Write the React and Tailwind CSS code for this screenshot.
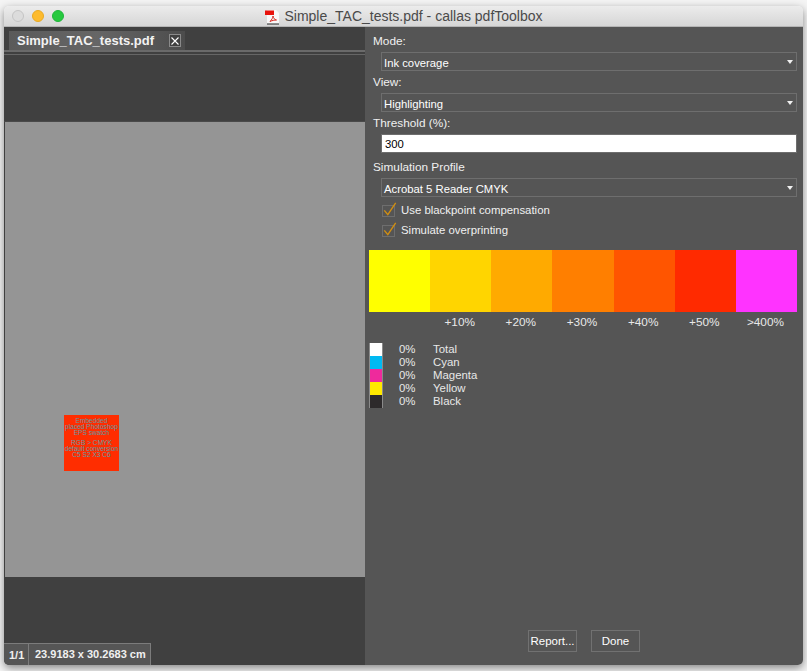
import React from "react";

const barColors = ["#ffff00", "#ffd500", "#ffaa00", "#ff7f00", "#ff5500", "#ff2a00", "#ff33ff"];
const barLabels = ["", "+10%", "+20%", "+30%", "+40%", "+50%", ">400%"];

const legend = [
  { name: "Total", color: "bg-[#ffffff]" },
  { name: "Cyan", color: "bg-[#00b9f2]" },
  { name: "Magenta", color: "bg-[#ee2a9c]" },
  { name: "Yellow", color: "bg-[#ffe900]" },
  { name: "Black", color: "bg-[#2d2a2b]" },
];

const PdfIcon = () => (
  <svg width="16" height="16" viewBox="0 0 16 16" className="mr-[4px]">
    <path d="M3 1H12L15 4V15H3Z" fill="#f8f8f8" />
    <path d="M1 1.5H10V6H1Z" fill="#e8120c" />
    <path d="M3 14.5H15V15.5H3Z" fill="#222222" />
    <path d="M6 12.5C8 10.5 9 8.5 9 7C9.5 9.5 10.5 10.5 12.5 11C10.5 11 8 11.5 6 12.5Z" fill="none" stroke="#d8261c" strokeWidth="1" />
  </svg>
);

const Select = ({ value }) => (
  <div className="ml-[8px] flex h-[19px] items-center justify-between border border-[#6e6e6e] pl-[2px] pr-[3px] pt-[3px] text-[11.3px] text-white">
    <span>{value}</span>
    <svg width="6" height="4" viewBox="0 0 6 4" className="mb-[3px]">
      <path d="M0 0H6L3 4Z" fill="#f0f0f0" />
    </svg>
  </div>
);

const Check = ({ label }) => (
  <div className="ml-[9px] mt-[8px] flex h-[12px] items-center">
    <div className="relative h-[12px] w-[13px] border border-[#6e6e6e]">
      <svg width="14" height="14" viewBox="0 0 16 16" className="absolute left-[0px] top-[-4px]">
        <path d="M1.5 9.5L5.5 14.5L14.5 1" fill="none" stroke="#d08e12" strokeWidth="1.6" />
      </svg>
    </div>
    <span className="ml-[6px] text-[11.4px] text-[#f0f0f0]">{label}</span>
  </div>
);

export default function App() {
  return (
    <div className="h-[671px] w-[807px] overflow-hidden bg-[#f4f4f4] px-[4px] pb-[6px] pt-[6px] font-['Liberation_Sans',Arial,sans-serif] text-[11.8px]">
      <div className="flex h-[659px] w-[799px] flex-col overflow-hidden rounded-[5px] shadow-[0_3px_8px_rgba(0,0,0,0.45)]">
        {/* title bar */}
        <div className="relative flex h-[21px] items-center justify-center border-b border-[#b5b5b5] bg-gradient-to-b from-[#ececec] to-[#d6d6d6]">
          <div className="absolute left-[8px] top-[4px] flex gap-[8px]">
            <div className="h-[12px] w-[12px] rounded-full border border-[#c4c4c4] bg-[#dcdcdc]" />
            <div className="h-[12px] w-[12px] rounded-full border border-[#e8a923] bg-[#fdbb2e]" />
            <div className="h-[12px] w-[12px] rounded-full border border-[#1fb53a] bg-[#27c93f]" />
          </div>
          <div className="flex items-center pt-[1px] text-[14px] text-[#4a4a4a]">
            <PdfIcon />
            <span>Simple_TAC_tests.pdf - callas pdfToolbox</span>
          </div>
        </div>

        <div className="flex min-h-0 flex-1">
          {/* left: document view */}
          <div className="flex w-[361px] flex-col bg-[#404040]">
            <div className="h-[25px] pl-[5px] pt-[4px]">
              <div className="flex h-[21px] w-[176px] items-center justify-between border-b-2 border-[#dc9400] bg-gradient-to-r from-[#5a5a5a] via-[#666666] to-[#4c4c4c] pl-[8px] pr-[4px] text-[13px] font-bold text-[#f2f2f2]">
                <span>Simple_TAC_tests.pdf</span>
                <div className="flex h-[13px] w-[12px] items-center justify-center border border-[#8a8a8a] bg-[#404040]">
                  <svg width="8" height="8" viewBox="0 0 8 8">
                    <path d="M0.5 0.5L7.5 7.5M7.5 0.5L0.5 7.5" stroke="#ffffff" strokeWidth="1.1" />
                  </svg>
                </div>
              </div>
            </div>
            <div className="mt-[-2px] h-[2px] bg-[#6a6a6a]" />
            <div className="mt-[2px] h-[1px] bg-[#666666]" />
            <div className="h-[67px] border-b border-[#4a4a4a]" />
            <div className="ml-[1px] flex h-[455px] flex-col bg-[#959595] pl-[59px] pt-[293px]">
              <div className="flex h-[56px] w-[55px] flex-col items-center bg-[#ff2d00] pt-[3px] text-center text-[6.6px] leading-[6px] text-[#5f9aa0]">
                <span>Embedded</span>
                <span className="whitespace-nowrap">placed Photoshop</span>
                <span>EPS swatch</span>
                <span className="mt-[4px]">RGB &gt; CMYK</span>
                <span className="whitespace-nowrap">default conversion</span>
                <span>C5 S2 X3 C6</span>
              </div>
            </div>
            <div className="flex flex-1 flex-col justify-end">
              <div className="flex h-[22px] w-[147px] items-center border-r border-t border-[#7c7c7c] bg-[#565656] font-bold text-[#f0f0f0]">
                <span className="w-[25px] border-r border-[#7c7c7c] pl-[5px] text-[11px] leading-[22px]">1/1</span>
                <span className="pl-[6px] text-[11px]">23.9183 x 30.2683 cm</span>
              </div>
            </div>
          </div>

          {/* right: settings */}
          <div className="flex flex-1 flex-col bg-[#555555] pl-[4px] pr-[6px] text-[#f0f0f0]">
            <div className="pl-[4px] pt-[7px]">
              <div className="h-[18px] leading-[14px]">Mode:</div>
              <Select value="Ink coverage" />
              <div className="mt-[3px] h-[19px] leading-[16px]">View:</div>
              <Select value="Highlighting" />
              <div className="mt-[2px] h-[20px] leading-[18px]">Threshold (%):</div>
              <div className="ml-[8px] flex h-[19px] items-center border border-[#6e6e6e] bg-white pl-[3px] pt-[1px] text-[11.3px] text-black">300</div>
              <div className="mt-[4px] h-[21px] leading-[21px]">Simulation Profile</div>
              <Select value="Acrobat 5 Reader CMYK" />
              <Check label="Use blackpoint compensation" />
              <Check label="Simulate overprinting" />
            </div>

            <div className="mt-[13px] flex h-[62px]">
              {barColors.map((c) => (
                <div key={c} className="flex-1" style={{ backgroundColor: c }} />
              ))}
            </div>
            <div className="mt-[3px] flex h-[14px] leading-[14px] text-[#e8e8e8]">
              {barLabels.map((l) => (
                <div key={l} className="flex-1 pr-[2px] text-center">{l}</div>
              ))}
            </div>

            <div className="mt-[14px] flex w-[130px] flex-col text-[11.4px]">
              {legend.map((item) => (
                <div key={item.name} className="flex h-[13px] items-center text-[#e8e8e8]">
                  <div className={`h-[13px] w-[14px] border-x border-[#8a8a8a] ${item.color}`} />
                  <span className="w-[16px]" />
                  <span className="w-[34px] pt-[1px]">0%</span>
                  <span className="pt-[1px]">{item.name}</span>
                </div>
              ))}
            </div>

            <div className="mb-[13px] mt-auto flex justify-end gap-[14px] pr-[157px] text-[11.5px] text-white">
              <div className="flex h-[22px] w-[49px] items-center justify-center border border-[#717171] pt-[1px]">Report...</div>
              <div className="flex h-[22px] w-[49px] items-center justify-center border border-[#717171] pt-[1px]">Done</div>
            </div>
          </div>
        </div>
      </div>
    </div>
  );
}
